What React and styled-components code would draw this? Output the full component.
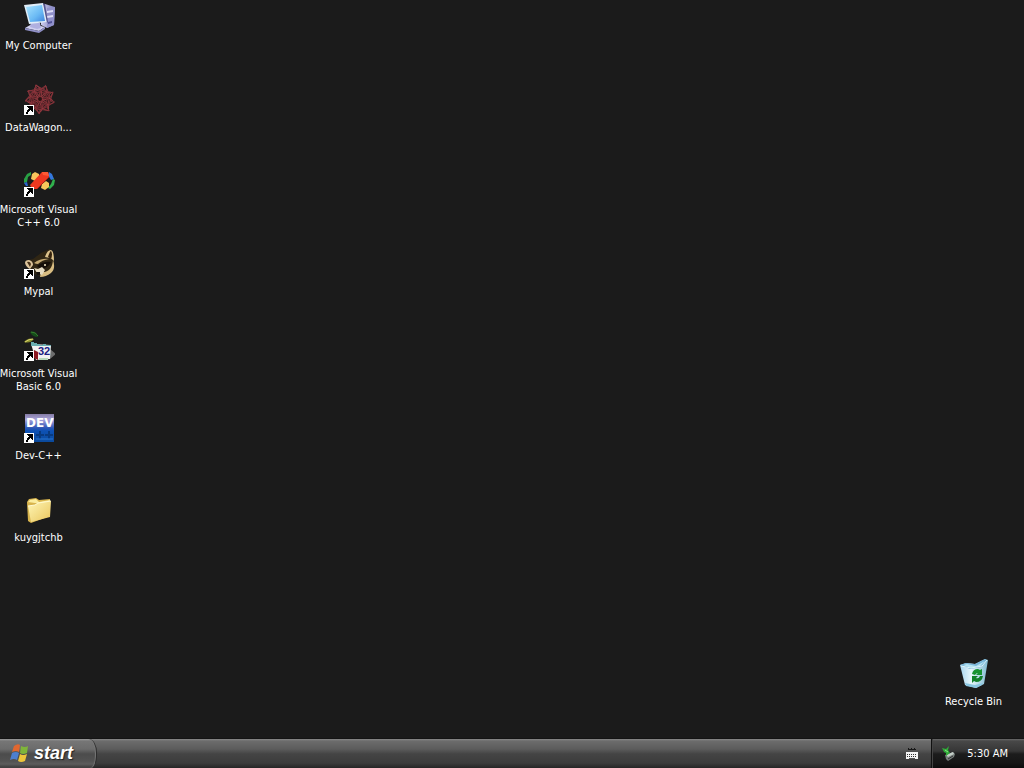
import React from "react";
import styled, { createGlobalStyle } from "styled-components";

const GlobalStyle = createGlobalStyle`
    body {
        margin: 0;
        background: #1b1b1b;
    }
    * {
        box-sizing: border-box;
    }
    button {
        border: 0;
        padding: 0;
        background: none;
        color: inherit;
        font: inherit;
    }
`;

const Screen = styled.div`
    display: flex;
    flex-direction: column;
    min-height: 100vh;
    background: #1b1b1b;
    color: #fff;
    font: 11px/13px Tahoma, "DejaVu Sans Condensed", "Noto Sans", sans-serif;
`;

const Desktop = styled.main`
    flex: 1;
    display: flex;
    justify-content: space-between;
    padding-right: 12px;
`;

const IconColumn = styled.div`
    display: flex;
    flex-direction: column;
    justify-content: ${(props) => (props.$bottom ? "flex-end" : "flex-start")};
    width: 77px;
`;

const Shortcut = styled.button`
    display: flex;
    flex-direction: column;
    align-items: center;
    gap: 5px;
    height: 82px;
    padding-top: 2px;
`;

const Picture = styled.svg`
    display: block;
    flex: none;
    width: 32px;
    height: 32px;
`;

const Label = styled.span`
    text-align: center;
    white-space: pre;
`;

const Taskbar = styled.footer`
    display: flex;
    height: 30px;
    border-top: 1px solid #141414;
    background: linear-gradient(#8a8a8a 0, #6c6c6c 2px, #5c5c5c 10px, #444 15px, #3c3c3c 24px, #262626 100%);
`;

const StartButton = styled.button`
    display: flex;
    align-items: center;
    gap: 4px;
    width: 97px;
    padding: 0 0 2px 10px;
    border-right: 1px solid #2c2c2c;
    border-radius: 0 8px 6px 0 / 0 14px 12px 0;
    background: linear-gradient(#a0a0a0 0, #767676 2px, #6c6c6c 10px, #4c4c4c 15px, #525252 22px, #5c5c5c 25px, #363636 100%);
    box-shadow: inset -1px 0 1px #777;
`;

const StartText = styled.span`
    font: italic bold 18px/22px "Liberation Sans", Arial, sans-serif;
    text-shadow: 1px 1px 1px #222;
`;

const Flag = styled.svg`
    width: 20px;
    height: 20px;
`;

const Language = styled.button`
    display: flex;
    align-items: center;
    margin-left: auto;
    padding: 0 11px;
`;

const Tray = styled.div`
    display: flex;
    align-items: center;
    justify-content: space-between;
    width: 93px;
    padding: 0 16px 0 9px;
    border-left: 1px solid #111;
    background: linear-gradient(#6a6a6a 0, #484848 2px, #363636 12px, #1c1c1c 15px, #161616 24px, #0c0c0c 100%);
    box-shadow: inset 1px 0 0 #444;
`;

const SmallIcon = styled.svg`
    display: block;
    width: 16px;
    height: 16px;
`;

function Arrow() {
    return (
        <g shapeRendering="crispEdges">
            <path d="M1 21h10v10H1z" fill="#fff" />
            <path d="M4 22h6v6H9v-1H8v-1H7v1H6v1H5v2H3v-2h1v-2h1v-1h1v-1H5v-1H4z" fill="#000" />
        </g>
    );
}

function ComputerIcon() {
    return (
        <Picture viewBox="0 0 32 32">
            <defs>
                <linearGradient id="glass" x2="1" y2="1">
                    <stop offset="0" stopColor="#a9e4ff" />
                    <stop offset="0.6" stopColor="#69b9f4" />
                    <stop offset="1" stopColor="#3f82dc" />
                </linearGradient>
                <linearGradient id="tower">
                    <stop offset="0" stopColor="#cfcff0" />
                    <stop offset="1" stopColor="#7878b4" />
                </linearGradient>
            </defs>
            <path d="M18 3l4-1 10 3-1 18-7 3-6-3z" fill="url(#tower)" />
            <path d="M24 6l8-1-1 18-7 3z" fill="#9090ca" />
            <path d="M24 9l6-1v2l-6 1zm0 5l6-1v2l-6 1z" fill="#dedef8" />
            <path d="M25 20l4-1v2l-4 1z" fill="#515196" />
            <path d="M2 26l7-4 13 3-6 4z" fill="#d0d0f0" />
            <path d="M2 26l14 3 6-4v2l-6 4-14-3z" fill="#9090c6" />
            <path d="M8 20l9 1 1 5-4 1-7-2z" fill="#b0b0e0" />
            <path d="M1 3l19-2 4 19-18 2z" fill="#e0edf8" />
            <path d="M3 5l16-2 3 16-15 1z" fill="url(#glass)" />
            <path d="M20 1l2 1 3 18-1 1z" fill="#54548c" />
        </Picture>
    );
}

function WagonIcon() {
    const turns = [0, 40, 80, 120, 160, 200, 240, 280, 320];
    return (
        <Picture viewBox="0 0 32 32">
            <circle cx="17" cy="15" r="11" fill="#351c1e" />
            <g fill="none" stroke="#93383f">
                {turns.map((angle) => (
                    <g key={angle} transform={`rotate(${angle} 17 15)`}>
                        <path d="M17 15q9-4 6-13-8 2-6 13" />
                        <path d="M12 1l10 5 7 12" stroke="#843239" />
                        <path d="M9 8l15 1" stroke="#702a30" />
                    </g>
                ))}
            </g>
            <circle cx="17" cy="15" r="2" fill="#2a1214" />
            <Arrow />
        </Picture>
    );
}

function VisualCIcon() {
    return (
        <Picture viewBox="0 0 32 32">
            <path d="M8 6L4 8 1 13v4l3-1 1-5 3-2z" fill="#28a044" />
            <path d="M1 17l3-1 1 4H3z" fill="#2864cc" />
            <path d="M26 6l3 2 2 5-3 1-3-5z" fill="#3478dc" />
            <path d="M30 13l2 1-1 5-4 4-2-1 3-4z" fill="#30b04c" />
            <path d="M9 8l3-2 4 2v4l-4 3-4-2z" fill="#f8c45c" />
            <path d="M19 18l4-3 3 2v4l-4 3-4-2z" fill="#f7c95c" />
            <path d="M19 6h6l1 5L14 23H9l-2-4z" fill="#ee3820" />
            <path d="M19 6h6l1 4-6-1z" fill="#ff5934" />
            <path d="M26 11L14 23" stroke="#a82217" />
            <Arrow />
        </Picture>
    );
}

function MypalIcon() {
    return (
        <Picture viewBox="0 0 32 32">
            <path d="M2 13l8-2 8-6 9-4 4 11-2 10-9 7-9-3-6-8z" fill="#302614" />
            <path d="M22 9q2-7 6-7 3 1 3 11-2-2-4-3z" fill="#dcc28b" />
            <path d="M25 9q2-6 3-6 2 3 0 8z" fill="#34220d" />
            <path d="M2 15q0-3 4-3 4 1 4 5l-3 4q-4-2-5-6z" fill="#dbc39b" />
            <path d="M4 14q3-1 4 2l-1 3z" fill="#463117" />
            <path d="M11 15q7-5 15-4-7 1-11 5-2 0-4-1z" fill="#c4a972" />
            <path d="M14 18q7-5 14-4-3 6-10 7z" fill="#150e08" />
            <path d="M30 12q3 9-2 13-5 4-11 4l1-5q11 1 12-12z" fill="#d9bd82" />
            <path d="M11 20l4 1 4-2 3 3-3 5-5-2z" fill="#e6dcc2" />
            <path d="M13 24h4v3h-3z" fill="#16120e" />
            <circle cx="22" cy="17" r="1" fill="#f6e8c5" />
            <Arrow />
        </Picture>
    );
}

function VisualBasicIcon() {
    return (
        <Picture viewBox="0 0 32 32">
            <path d="M7 2q6-2 8 5-6 0-8-5z" fill="#154d18" />
            <path d="M8 2q5 0 7 4" fill="none" stroke="#367b30" />
            <path d="M1 12q4-5 10-3-4 5-10 3z" fill="#898e2c" />
            <path d="M2 12q4-3 8-3" fill="none" stroke="#ddd673" />
            <path d="M27 19l6 5-6 5z" fill="#6d6d6d" />
            <path d="M8 14l20 1-1 14-14 1z" fill="#f2f2f2" />
            <path d="M8 12h3v1h3v1h3v1h3v-1h3v1h5v1H8z" fill="#6aaeb0" />
            <path d="M11 20l4 2v8l-4-2z" fill="#8d1821" />
            <path d="M16 28h9v2h-9z" fill="#b7d7ba" />
            <text x="15" y="25" fill="#202080" fontFamily="Liberation Sans, sans-serif" fontWeight="bold" fontSize="11">32</text>
            <Arrow />
        </Picture>
    );
}

function DevIcon() {
    return (
        <Picture viewBox="0 0 32 32">
            <defs>
                <linearGradient id="dev" x2="0" y2="1">
                    <stop offset="0" stopColor="#857ca4" />
                    <stop offset="0.2" stopColor="#aaa4dc" />
                    <stop offset="0.5" stopColor="#2c55b5" />
                    <stop offset="0.6" stopColor="#0d51b4" />
                    <stop offset="1" stopColor="#0b4a9c" />
                </linearGradient>
            </defs>
            <path d="M2 2h29v28H2z" fill="url(#dev)" />
            <text x="3" y="15" fill="#fff" fontFamily="DejaVu Sans, sans-serif" fontWeight="bold" fontSize="12">DEV</text>
            <path d="M13 23h8m-4-4v8m5-4h8m-4-4v8" stroke="#083a80" strokeWidth="2" />
            <path d="M13 27h17" stroke="#2675d2" />
            <Arrow />
        </Picture>
    );
}

function FolderIcon() {
    return (
        <Picture viewBox="0 0 32 32">
            <defs>
                <linearGradient id="folder" x2="1" y2="1">
                    <stop offset="0" stopColor="#fff7b7" />
                    <stop offset="1" stopColor="#e9c55c" />
                </linearGradient>
            </defs>
            <path d="M4 8l2-3 7-1 3 2 11-1v17L8 29l-3-2z" fill="#d8b44d" />
            <path d="M5 8l2-2 6-1 3 3 11-2-1 5z" fill="#fbed9e" />
            <path d="M5 12l7-1 3-2 13-2-1 16L8 28z" fill="url(#folder)" />
            <path d="M5 12l7-1 3-2 13-2" fill="none" stroke="#fffad0" />
        </Picture>
    );
}

function RecycleIcon() {
    return (
        <Picture viewBox="0 0 32 32">
            <defs>
                <linearGradient id="bin">
                    <stop offset="0" stopColor="#a9d6ef" />
                    <stop offset="0.4" stopColor="#e7f7fb" />
                    <stop offset="1" stopColor="#7fb9d1" />
                </linearGradient>
            </defs>
            <path d="M2 7l6-2 9 1 10-5 3 1-4 24-8 4-11-3z" fill="url(#bin)" />
            <path d="M2 7l6-2 9 1 10-5 2 2-6 6-11 2z" fill="#79b5d8" />
            <path d="M5 7l4-1 9 2 9-5-5 5-9 2z" fill="#b6e5f3" />
            <path d="M3 8l10 2 11-2 5-6" fill="none" stroke="#dff6fc" />
            <path d="M7 25l10 2 8-2-1 2-6 3-10-2z" fill="#8bc7e2" />
            <path d="M14 16q1-5 6-5l2 1 2-1v6h-6l2-2q-2 0-3 2z" fill="#189331" />
            <path d="M25 18q-1 6-7 6l-2-1-2 2v-7h6l-2 2q3 1 4-2z" fill="#12812a" />
        </Picture>
    );
}

function WindowsFlag() {
    return (
        <Flag viewBox="0 0 20 20">
            <path d="M4 3q4-3 6-1L9 9Q6 7 2 9z" fill="#e2672f" />
            <path d="M11 3q4 2 7 0l-1 7q-4 2-7 0z" fill="#7fb53a" />
            <path d="M2 10q4-2 7 0l-2 7q-3-2-7 0z" fill="#4d7fd0" />
            <path d="M10 11q3 2 7 0l-2 7q-4 2-7 0z" fill="#edc53b" />
        </Flag>
    );
}

function KeyboardIcon() {
    return (
        <SmallIcon viewBox="0 0 16 16" shapeRendering="crispEdges">
            <path d="M4 2h1v1h2V2h1v1h2V2h1v1h1v1H4z" fill="#171717" />
            <path d="M2 6h12v7H2z" fill="#f4f4f4" />
            <path d="M3 8h10M3 10h10" stroke="#333" strokeDasharray="1 1" />
            <path d="M5 12h6" stroke="#555" />
        </SmallIcon>
    );
}

function DeviceIcon() {
    return (
        <SmallIcon viewBox="0 0 16 16">
            <path d="M4 9l8-3 2 2-1 3-6 4-2-2z" fill="#777f7c" />
            <path d="M5 9l7-3 1 2-6 3z" fill="#c4cec7" />
            <path d="M7 13l5-3" stroke="#333" />
            <path d="M1 2l4 1 3-3-1 4 2 3-4 3 0-3-2-1z" fill="#30ac39" />
            <path d="M4 4l3 2" stroke="#8be584" />
        </SmallIcon>
    );
}

const shortcuts = [
    { name: "My Computer", Icon: ComputerIcon },
    { name: "DataWagon...", Icon: WagonIcon },
    { name: "Microsoft Visual\nC++ 6.0", Icon: VisualCIcon },
    { name: "Mypal", Icon: MypalIcon },
    { name: "Microsoft Visual\nBasic 6.0", Icon: VisualBasicIcon },
    { name: "Dev-C++", Icon: DevIcon },
    { name: "kuygjtchb", Icon: FolderIcon },
];

function DesktopItem({ name, Icon }) {
    return (
        <Shortcut type="button">
            <Icon />
            <Label>{name}</Label>
        </Shortcut>
    );
}

export default function App() {
    return (
        <Screen>
            <GlobalStyle />
            <Desktop>
                <IconColumn>
                    {shortcuts.map((item) => (
                        <DesktopItem key={item.name} {...item} />
                    ))}
                </IconColumn>
                <IconColumn $bottom>
                    <DesktopItem name="Recycle Bin" Icon={RecycleIcon} />
                </IconColumn>
            </Desktop>
            <Taskbar>
                <StartButton type="button">
                    <WindowsFlag />
                    <StartText>start</StartText>
                </StartButton>
                <Language type="button" aria-label="Keyboard">
                    <KeyboardIcon />
                </Language>
                <Tray>
                    <DeviceIcon />
                    <time>5:30 AM</time>
                </Tray>
            </Taskbar>
        </Screen>
    );
}
